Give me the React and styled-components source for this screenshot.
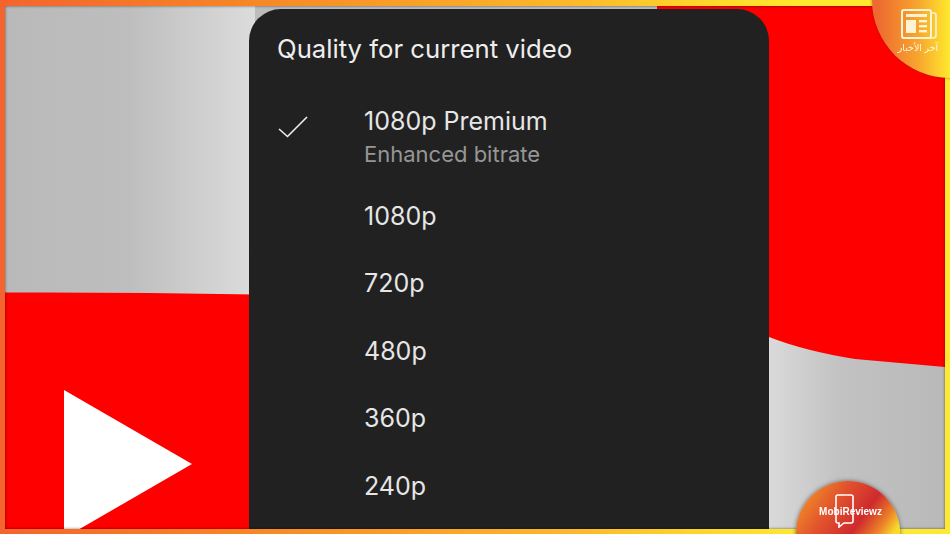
import React from 'react';
import styled, { createGlobalStyle } from 'styled-components';

const GlobalStyle = createGlobalStyle`
  html, body {
    margin: 0;
    padding: 0;
    background: #000;
  }
`;

const Frame = styled.div`
  width: 950px;
  height: 534px;
  box-sizing: border-box;
  padding: 6px 5px 5px 5px;
  position: relative;
  overflow: hidden;
  background: linear-gradient(90deg, #f4642e 0%, #f68526 25%, #fcb82a 60%, #fdd82c 75%, #ffe92e 85%);
`;

const Stage = styled.div`
  position: relative;
  height: 100%;
  display: flex;
  justify-content: flex-start;
  align-items: flex-end;
  overflow: hidden;
  background: #bcbcbc;

  &::after {
    content: '';
    position: absolute;
    inset: 0;
    box-shadow: inset 0 0 3px rgba(0, 0, 0, 0.55);
    pointer-events: none;
  }
`;

const Backdrop = styled.svg`
  position: absolute;
  inset: 0;
  width: 100%;
  height: 100%;
`;

const Sheet = styled.div`
  position: relative;
  width: 520px;
  height: 520px;
  margin-left: 244px;
  box-sizing: border-box;
  padding-left: 28px;
  background: #212121;
  border-radius: 32px 32px 0 0;
  display: flex;
  flex-direction: column;
  font-family: Inter, "Liberation Sans", sans-serif;
`;

const Title = styled.div`
  height: 83px;
  padding-top: 23px;
  box-sizing: border-box;
  font-size: 25.7px;
  line-height: 34px;
  color: #eeeeee;
`;

const Row = styled.div`
  height: ${(p) => (p.$tall ? '90px' : '67.5px')};
  display: grid;
  grid-template-columns: 87px 1fr;
  align-items: center;
`;

const Labels = styled.div`
  display: flex;
  flex-direction: column;
  gap: 4px;
`;

const Label = styled.div`
  font-size: 25px;
  line-height: 30px;
  color: #e6e6e6;
`;

const Sub = styled.div`
  font-size: 22px;
  line-height: 28px;
  color: #969696;
`;

const Check = styled.svg`
  width: 32px;
  height: 24px;
  display: block;
  margin-top: -18px;
`;

const NewsBadge = styled.div`
  position: absolute;
  top: -78px;
  right: -78px;
  width: 156px;
  height: 156px;
  border-radius: 50%;
  background: linear-gradient(90deg, #ee6a30 4%, #f7a72e 30%, #ffe92c 50%);
  box-shadow: 0 0 3px rgba(120, 40, 0, 0.6);
`;

const NewsContent = styled.div`
  position: absolute;
  top: 87px;
  right: 85px;
  width: 50px;
  display: flex;
  flex-direction: column;
  align-items: center;
  gap: 2px;
  filter: blur(0.3px);
`;

const NewsIcon = styled.svg`
  width: 37px;
  height: 30px;
  display: block;
`;

const NewsText = styled.div`
  font-family: "Noto Sans", "DejaVu Sans", sans-serif;
  font-size: 9.5px;
  line-height: 13px;
  color: #fff6e0;
  white-space: nowrap;
`;

const ReviewBadge = styled.div`
  position: absolute;
  left: 796px;
  top: 481px;
  width: 104px;
  height: 104px;
  border-radius: 50%;
  background: linear-gradient(125deg, #f08a28 10%, #e2542c 30%, #cf2a2e 52%, #ec8028 66%, #f8dc2c 76%);
  box-shadow: 0 0 4px rgba(60, 60, 60, 0.7);
  display: flex;
  justify-content: center;
`;

const PhoneIcon = styled.svg`
  position: absolute;
  top: 13px;
  left: 39px;
  width: 19px;
  height: 34px;
  filter: blur(0.3px);
`;

const ReviewText = styled.div`
  position: relative;
  margin: 24px 0 0 5px;
  font-family: "Liberation Sans", Arial, sans-serif;
  font-weight: 700;
  font-size: 10px;
  line-height: 13px;
  color: #fff;
  white-space: nowrap;
  filter: blur(0.3px);
`;

const options = ['1080p', '720p', '480p', '360p', '240p'];

export default function App() {
  return (
    <>
      <GlobalStyle />
      <Frame>
        <Stage>
          <Backdrop viewBox="0 0 940 523" preserveAspectRatio="none">
            <defs>
              <linearGradient id="leftGray" x1="0" x2="1" y1="0" y2="0">
                <stop offset="0" stopColor="#b9b9b9" />
                <stop offset="0.5" stopColor="#bebebe" />
                <stop offset="1" stopColor="#dcdcdc" />
              </linearGradient>
              <linearGradient id="rightGray" x1="0" x2="1" y1="0" y2="0">
                <stop offset="0" stopColor="#dadada" />
                <stop offset="0.4" stopColor="#c2c2c2" />
                <stop offset="1" stopColor="#b9b9b9" />
              </linearGradient>
            </defs>
            <rect x="0" y="0" width="250" height="300" fill="url(#leftGray)" />
            <path d="M0 286.5 Q120 286 250 288.5 V523 H0 Z" fill="#fe0000" />
            <rect x="652" y="0" width="288" height="375" fill="#fe0000" />
            <path d="M764 331 Q800 345 850 353 L940 361 V523 H764 Z" fill="url(#rightGray)" />
            <path d="M59 384 L187 458 L59 532 Z" fill="#ffffff" />
          </Backdrop>
          <Sheet>
            <Title>Quality for current video</Title>
            <Row $tall>
              <Check viewBox="0 0 32 24">
                <path d="M2 13 L10.5 20.5 L30 1" fill="none" stroke="#eeeeee" strokeWidth="1.6" />
              </Check>
              <Labels>
                <Label>1080p Premium</Label>
                <Sub>Enhanced bitrate</Sub>
              </Labels>
            </Row>
            {options.map((o) => (
              <Row key={o}>
                <span />
                <Label>{o}</Label>
              </Row>
            ))}
          </Sheet>
        </Stage>
        <NewsBadge>
          <NewsContent>
            <NewsIcon viewBox="0 0 37 30">
              <path d="M2 3 a2 2 0 0 1 2-2 H29 a2 2 0 0 1 2 2 V27 a2 2 0 0 1-2 2 H4 a2 2 0 0 1-2-2 Z" fill="none" stroke="#fff3d6" strokeWidth="2" />
              <path d="M31 4 H34 a2 2 0 0 1 2 2 V26 a3 3 0 0 1-3 3 H29" fill="none" stroke="#fff3d6" strokeWidth="1.6" />
              <rect x="6" y="5" width="21" height="3" fill="#fff3d6" />
              <rect x="6" y="11" width="10" height="13" fill="#fff3d6" />
              <rect x="19" y="11" width="8" height="2.4" fill="#fff3d6" />
              <rect x="19" y="16" width="8" height="2.4" fill="#fff3d6" />
              <rect x="19" y="21" width="8" height="2.4" fill="#fff3d6" />
            </NewsIcon>
            <NewsText dir="rtl">آخر الأخبار</NewsText>
          </NewsContent>
        </NewsBadge>
        <ReviewBadge>
          <PhoneIcon viewBox="0 0 19 34">
            <path d="M3 1 H16 a2 2 0 0 1 2 2 V27 a2 2 0 0 1-2 2 H9 L4 33 V29 H3 a2 2 0 0 1-2-2 V3 a2 2 0 0 1 2-2 Z" fill="none" stroke="#ffffff" strokeWidth="1.6" />
          </PhoneIcon>
          <ReviewText>MobiReviewz</ReviewText>
        </ReviewBadge>
      </Frame>
    </>
  );
}
